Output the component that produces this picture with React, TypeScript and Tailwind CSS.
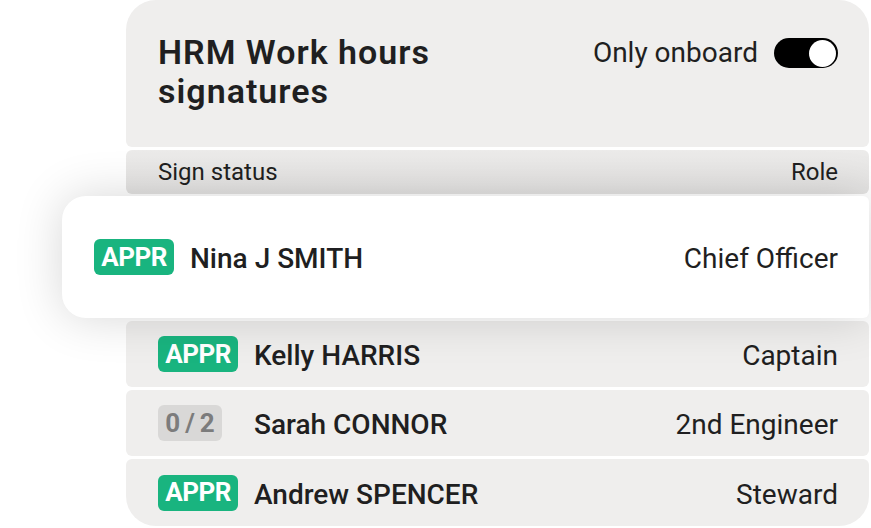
import React from "react";

type Person = {
  name: string;
  role: string;
  status: "appr" | "partial";
  progress?: string;
};

const rows: Person[] = [
  { name: "Kelly HARRIS", role: "Captain", status: "appr" },
  { name: "Sarah CONNOR", role: "2nd Engineer", status: "partial", progress: "0 / 2" },
  { name: "Andrew SPENCER", role: "Steward", status: "appr" },
];

function Badge({ status, progress }: { status: Person["status"]; progress?: string }) {
  if (status === "appr") {
    return (
      <span className="inline-flex h-[36px] w-[80px] items-center justify-center rounded-[6px] bg-[#19b47f] text-[26px] font-bold tracking-[-0.5px] text-white">
        APPR
      </span>
    );
  }
  return (
    <span className="inline-flex h-[36px] w-[64px] items-center justify-center gap-[5px] rounded-[6px] bg-[#d9d8d7] text-[26px] font-bold text-[#7c7c7c]">
      {progress?.split(" ").map((p, i) => (
        <span key={i}>{p}</span>
      ))}
    </span>
  );
}

export default function App() {
  return (
    <div
      className="relative h-[528px] w-[871px] overflow-hidden bg-white text-[#1f1f21]"
      style={{ fontFamily: "Roboto, 'Noto Sans', sans-serif" }}
    >
      <div className="flex flex-col pl-[126px] pr-[2px]">
        {/* Header */}
        <div className="flex h-[147px] justify-between rounded-t-[30px] rounded-b-[6px] bg-[#efeeed] pl-[32px] pr-[31px] pt-[33px]">
          <h1 className="text-[34px] font-semibold leading-[39px] tracking-[1px]">
            HRM Work hours
            <br />
            signatures
          </h1>
          <div className="mt-[5px] flex h-[30px] items-center gap-[16px]">
            <span className="text-[28px] leading-[30px]">Only onboard</span>
            <span className="flex h-[30px] w-[64px] items-center justify-end rounded-full bg-black pr-[2px]">
              <span className="h-[27px] w-[27px] rounded-full bg-white" />
            </span>
          </div>
        </div>

        {/* Column headings */}
        <div className="mt-[3px] flex h-[44px] items-center justify-between rounded-[6px] bg-gradient-to-b from-[#ecebea] to-[#e3e2e1] px-[32px] pr-[31px] text-[24px]">
          <span>Sign status</span>
          <span>Role</span>
        </div>

        {/* Raised row */}
        <div className="relative z-10 -ml-[64px] mt-[2px] flex h-[122px] items-center rounded-l-[24px] rounded-r-[6px] bg-white pl-[32px] pr-[31px] shadow-[0_0_48px_rgba(0,0,0,0.16)]">
          <Badge status="appr" />
          <span className="ml-[16px] mt-[4px] text-[28px] font-medium">Nina J SMITH</span>
          <span className="ml-auto mt-[4px] text-[28px]">Chief Officer</span>
        </div>

        {rows.map((r, i) => (
          <div
            key={r.name}
            className={
              "mt-[3px] flex items-center bg-[#efeeed] pl-[32px] pr-[31px] " +
              (i === rows.length - 1
                ? "h-[67px] rounded-t-[6px] rounded-b-[30px]"
                : "h-[66px] rounded-[6px]")
            }
          >
            <Badge status={r.status} progress={r.progress} />
            <span
              className={
                "mt-[4px] text-[28px] font-medium " +
                (r.status === "appr" ? "ml-[16px]" : "ml-[32px]")
              }
            >
              {r.name}
            </span>
            <span className="ml-auto mt-[4px] text-[28px]">{r.role}</span>
          </div>
        ))}
      </div>
    </div>
  );
}
